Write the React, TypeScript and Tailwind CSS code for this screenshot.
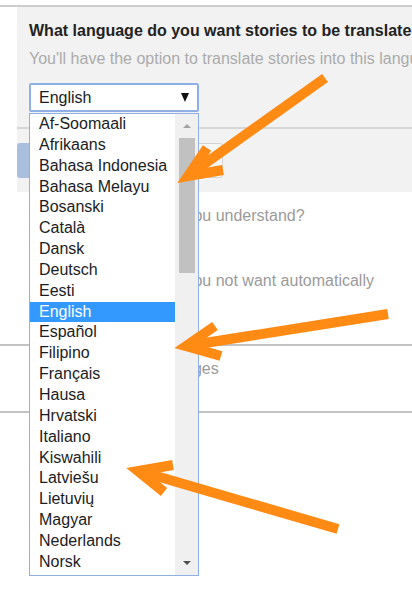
const languages = [
  "Af-Soomaali",
  "Afrikaans",
  "Bahasa Indonesia",
  "Bahasa Melayu",
  "Bosanski",
  "Català",
  "Dansk",
  "Deutsch",
  "Eesti",
  "English",
  "Español",
  "Filipino",
  "Français",
  "Hausa",
  "Hrvatski",
  "Italiano",
  "Kiswahili",
  "Latviešu",
  "Lietuvių",
  "Magyar",
  "Nederlands",
  "Norsk",
];

const Arrows = () => (
  <svg
    className="absolute inset-0 pointer-events-none z-20"
    width={412}
    height={600}
    viewBox="0 0 412 600"
    fill="none"
    stroke="#ff8a14"
    strokeWidth={10}
    strokeLinejoin="miter"
  >
    <path d="M325 78 L189 175" />
    <path d="M207 148 L188 176 L223 170" />
    <path d="M388 314 L186 346" />
    <path d="M215 326 L186 346 L221 356" />
    <path d="M338 529 L139 471" />
    <path d="M173 465 L138 471 L164 492" />
  </svg>
);

const LanguageList = ({ selected }: { selected: string }) => (
  <div className="absolute left-0 top-[30px] w-[170px] h-[463px] border border-[#8fb0e6] bg-white flex overflow-hidden z-10">
    <div className="flex-1 flex flex-col">
      {languages.map(lang => (
        <div
          key={lang}
          className={`h-[20.85px] shrink-0 pl-[9px] text-[16px] leading-[20.85px] whitespace-nowrap ${
            lang === selected ? "bg-[#3399ff] text-white" : "text-[#1c1c24]"
          }`}
        >
          {lang}
        </div>
      ))}
    </div>
    <div className="w-[23px] bg-[#f0f0f0] flex flex-col items-center">
      <div className="h-[24px] w-full flex items-center justify-center">
        <div className="w-0 h-0 border-l-[4px] border-r-[4px] border-b-[4px] border-l-transparent border-r-transparent border-b-[#a3a3a3]" />
      </div>
      <div className="w-[16px] h-[135px] bg-[#c1c1c1]" />
      <div className="flex-1" />
      <div className="h-[24px] w-full flex items-center justify-center">
        <div className="w-0 h-0 border-l-[4px] border-r-[4px] border-t-[4px] border-l-transparent border-r-transparent border-t-[#505050]" />
      </div>
    </div>
  </div>
);

export default function App() {
  return (
    <div
      className="relative w-[412px] h-[600px] overflow-hidden bg-white"
      style={{ fontFamily: '"Liberation Sans", Arial, sans-serif' }}
    >
      <div className="pt-[5px]">
        <div className="h-[2px] bg-[#cdcdcd]" />
      </div>
      <div className="relative z-10 ml-[17px] bg-[#f2f2f2] pt-[15px] pb-[14px]">
        <div className="pl-[12px] whitespace-nowrap">
          <p className="text-[16px] leading-[18px] font-bold text-[#222]">
            What language do you want stories to be translated into?
          </p>
          <p className="mt-[10px] text-[16px] leading-[18px] text-[#ababab]">
            You'll have the option to translate stories into this language.
          </p>
          <div className="relative mt-[15px] w-[170px]">
            <div className="h-[29px] border-2 border-[#8fb0e6] rounded-[2px] bg-white flex items-center justify-between pl-[8px] pr-[8px]">
              <span className="text-[16px] text-[#1c1c24]">English</span>
              <span className="w-0 h-0 border-l-[4.5px] border-r-[4.5px] border-t-[9px] border-l-transparent border-r-transparent border-t-[#111]" />
            </div>
            <LanguageList selected="English" />
          </div>
        </div>
        <div className="mt-[15px] h-[2px] bg-[#d6d6d6]" />
        <div className="mt-[14px] flex gap-[8px]">
          <div className="w-[110px] h-[35px] rounded-l-[3px] bg-[#a9bfdd]" />
          <div className="w-[88px] h-[35px] rounded-[3px] border border-[#d2d2d2] bg-[#f7f7f7]" />
        </div>
      </div>
      <div className="text-[16px] leading-[18px] text-[#9a9a9a]">
        <p className="mt-[15px] pl-[36px] whitespace-nowrap">Which languages do you understand?</p>
        <p className="mt-[47px] pl-[36px] w-[380px]">
          Which languages do you not want automatically translated?
        </p>
        <div className="mt-[36px] h-[2px] bg-[#c3c3c3]" />
        <p className="mt-[14px] pl-[47px] whitespace-nowrap">Manage your languages</p>
        <div className="mt-[33px] h-[2px] bg-[#c3c3c3]" />
      </div>
      <Arrows />
    </div>
  );
}
